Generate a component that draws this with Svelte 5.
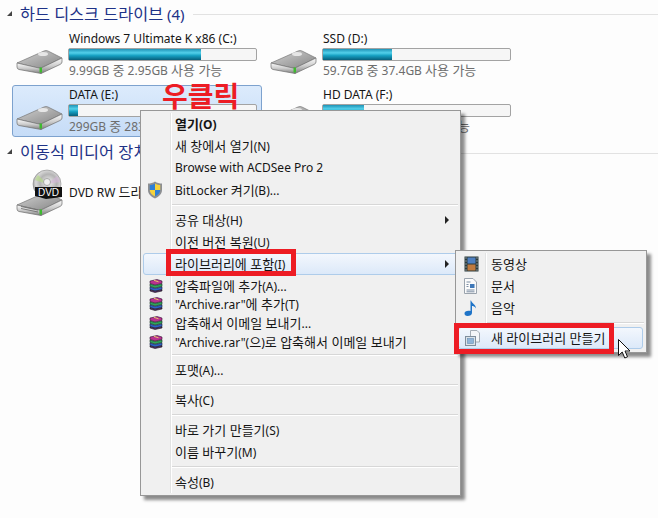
<script>
	const drives = [
		{ name: 'Windows 7 Ultimate K x86 (C:)', info: '9.99GB 중 2.95GB 사용 가능', used: 70.5 },
		{ name: 'SSD (D:)', info: '59.7GB 중 37.4GB 사용 가능', used: 37 },
		{ name: 'DATA (E:)', info: '299GB 중 283GB 사용 가능', used: 5, selected: true },
		{ name: 'HD DATA (F:)', info: '931GB 중 726GB 사용 가능', used: 22 }
	];

	const rarItems = [
		'압축파일에 추가(A)...',
		'"Archive.rar"에 추가(T)',
		'압축해서 이메일 보내기...',
		'"Archive.rar"(으)로 압축해서 이메일 보내기'
	];

	// hangul runs are set a size up, the old menu font drew them wider than its latin
	const runs = (s) => s.split(/([\uAC00-\uD7A3]+(?: [\uAC00-\uD7A3]+)*)/).filter(Boolean);
	const isKo = (s) => /[\uAC00-\uD7A3]/.test(s);
</script>

{#snippet label(text)}
	<span class="label">{#each runs(text) as r}<span class:ko={isKo(r)}>{r}</span>{/each}</span>
{/snippet}

<svg class="defs" width="0" height="0">
	<defs>
		<linearGradient id="hddTop" x1="0" y1="0" x2="1" y2="1">
			<stop offset="0" stop-color="#d4d4d4" />
			<stop offset="0.55" stop-color="#a8a8a8" />
			<stop offset="1" stop-color="#858585" />
		</linearGradient>
		<linearGradient id="hddFront" x1="0" y1="0" x2="0" y2="1">
			<stop offset="0" stop-color="#fcfcfc" />
			<stop offset="0.5" stop-color="#cdcdcd" />
			<stop offset="1" stop-color="#7d7d7d" />
		</linearGradient>
		<radialGradient id="disc" cx="0.55" cy="0.45" r="0.6">
			<stop offset="0" stop-color="#f4f4f4" />
			<stop offset="0.5" stop-color="#b4b4b4" />
			<stop offset="0.75" stop-color="#d8d8d8" />
			<stop offset="1" stop-color="#8e8e8e" />
		</radialGradient>
		<symbol id="hdd" viewBox="0 0 47 24">
			<path d="M1 13 L28 1 Q30 0 32 1 L46 8 L25 18 Q24 18.500 22 18 Z" fill="url(#hddTop)" stroke="#777" stroke-width="0.7" stroke-linejoin="round" />
			<ellipse cx="27" cy="4" rx="5" ry="2" fill="#e6e6e6" />
			<path d="M1 13 L23 18 L25 18 L25 23.500 L3 19.500 Q1 19 1 17 Z" fill="url(#hddFront)" stroke="#6e6e6e" stroke-width="0.7" stroke-linejoin="round" />
			<path d="M25 18 L46 8 L46 12 Q46 13.500 44 14.500 L25 23.500 Z" fill="url(#hddFront)" stroke="#6e6e6e" stroke-width="0.7" stroke-linejoin="round" />
			<rect x="23.500" y="17.500" width="2.500" height="5" fill="#3dbb2e" />
		</symbol>
		<symbol id="rar" viewBox="0 0 14 14">
			<path d="M1 2 L8 .5 L13 2 V4.500 L6 6 L1 4.500 Z" fill="#b8318f" stroke="#2b1030" stroke-width="0.6" stroke-linejoin="round" />
			<path d="M5 1.300 L9.500 2.800" stroke="#e6c36a" stroke-width="1" />
			<path d="M1 5 L6 6.500 L13 5 V7.500 L6 9 L1 7.500 Z" fill="#2fa65a" stroke="#10301d" stroke-width="0.6" stroke-linejoin="round" />
			<path d="M1 8 L6 9.500 L13 8 V10.500 L6 12 L1 10.500 Z" fill="#2f62c8" stroke="#101c40" stroke-width="0.6" stroke-linejoin="round" />
			<path d="M1 10.800 L6 12.200 L13 10.800 V12 L6 13.500 L1 12 Z" fill="#5a2a70" stroke="#15151a" stroke-width="0.6" stroke-linejoin="round" />
		</symbol>
	</defs>
</svg>

<div class="explorer">
	<div class="group-head">
		<span class="tri"></span>
		<span class="group-title">{@render label('하드 디스크 드라이브 (4)')}</span>
		<span class="rule"></span>
	</div>

	<div class="tiles">
		{#each drives as d}
			<div class="tile" class:selected={d.selected}>
				<svg class="hdd" width="47" height="24"><use href="#hdd" /></svg>
				<div class="tile-body">
					<div class="name">{d.name}</div>
					<div class="bar"><div class="fill" style="width: {d.used}%"></div></div>
					<div class="info">{@render label(d.info)}</div>
				</div>
			</div>
		{/each}
	</div>

	<div class="group-head second">
		<span class="tri"></span>
		<span class="group-title">{@render label('이동식 미디어 장치 (1)')}</span>
		<span class="rule"></span>
	</div>

	<div class="dvd-row">
		<svg class="dvd" width="47" height="47" viewBox="0 0 47 47">
			<circle cx="31" cy="15" r="14" fill="url(#disc)" stroke="#8a8a8a" stroke-width="0.6" />
			<path d="M31 15 L22 6 A13 13 0 0 0 19 11 Z" fill="#b7d98a" opacity="0.7" />
			<path d="M31 15 L41 7 A13 13 0 0 1 44 13 Z" fill="#d4b7d9" opacity="0.6" />
			<circle cx="31" cy="13" r="3.500" fill="#efefef" stroke="#999" stroke-width="0.8" />
			<use href="#hdd" x="0" y="23" width="47" height="24" />
			<path d="M5 37.500 L22 41 M5 39.500 L22 43" stroke="#666" stroke-width="0.8" />
			<path d="M19 18 H46 V28 L30 30 L19 27 Z" fill="#111" />
			<text x="32.500" y="26.500" class="dvd-label">DVD</text>
		</svg>
		<div class="name">{@render label('DVD RW 드라이브 (G:)')}</div>
	</div>
</div>

<div class="ctx-menu main">
	<div class="gutter"></div>
	<div class="item bold">{@render label('열기(O)')}</div>
	<div class="item">{@render label('새 창에서 열기(N)')}</div>
	<div class="item">Browse with ACDSee Pro 2</div>
	<div class="item">
		<svg class="ico shield" width="16" height="18" viewBox="0 0 16 18">
			<path d="M8 .5 C10 2 12.500 2.500 15 2.500 V9 C15 13 12 15.500 8 17.500 C4 15.500 1 13 1 9 V2.500 C3.500 2.500 6 2 8 .5 Z" fill="#8d8f92" />
			<path d="M8 2.500 C6 3.500 4.500 4 2.800 4 V9 H8 Z" fill="#2f7fd6" />
			<path d="M8 2.500 C10 3.500 11.500 4 13.200 4 V9 H8 Z" fill="#f6d23c" />
			<path d="M2.800 9 H8 V15.300 C5 14 2.800 12 2.800 9 Z" fill="#f6d23c" />
			<path d="M13.200 9 H8 V15.300 C11 14 13.200 12 13.200 9 Z" fill="#2f7fd6" />
		</svg>
		{@render label('BitLocker 켜기(B)...')}
	</div>
	<div class="sep"></div>
	<div class="item">{@render label('공유 대상(H)')}<span class="arrow"></span></div>
	<div class="item">{@render label('이전 버전 복원(U)')}</div>
	<div class="item hot">{@render label('라이브러리에 포함(I)')}<span class="arrow"></span></div>
	<div class="rar-list">
		{#each rarItems as text}
			<div class="item rar">
				<svg class="ico" width="14" height="14"><use href="#rar" /></svg>
				{@render label(text)}
			</div>
		{/each}
	</div>
	<div class="sep"></div>
	<div class="item">{@render label('포맷(A)...')}</div>
	<div class="sep"></div>
	<div class="item">{@render label('복사(C)')}</div>
	<div class="sep"></div>
	<div class="item">{@render label('바로 가기 만들기(S)')}</div>
	<div class="item">{@render label('이름 바꾸기(M)')}</div>
	<div class="sep"></div>
	<div class="item">{@render label('속성(B)')}</div>
</div>

<div class="ctx-menu sub">
	<div class="gutter"></div>
	<div class="item">
		<svg class="ico" width="15" height="16" viewBox="0 0 15 16">
			<rect x="0.500" y="0.500" width="14" height="15" fill="#2b3a3c" />
			<rect x="3.500" y="1.500" width="8" height="6" fill="#4e7fc0" />
			<rect x="3.500" y="8.500" width="8" height="6" fill="#c07a3e" />
			<path d="M1.500 2h1M1.500 5h1M1.500 8h1M1.500 11h1M1.500 14h1M12.500 2h1M12.500 5h1M12.500 8h1M12.500 11h1M12.500 14h1" stroke="#d8e0e0" stroke-width="1.200" />
		</svg>
		{@render label('동영상')}
	</div>
	<div class="item">
		<svg class="ico" width="13" height="16" viewBox="0 0 13 16">
			<path d="M.5 .5 H9 L12.500 4 V15.500 H.5 Z" fill="#fbfbfb" stroke="#9aa3ad" />
			<path d="M2.500 4h4M2.500 12h8M2.500 13.800h8" stroke="#7d8ea3" />
			<rect x="6" y="6" width="4.500" height="4" fill="#3f78b8" />
			<path d="M2.500 6.500h2M2.500 8.500h2" stroke="#7d8ea3" />
		</svg>
		{@render label('문서')}
	</div>
	<div class="item">
		<svg class="ico" width="14" height="17" viewBox="0 0 14 17">
			<path d="M7 1 C8 4 12 5 12 9 C11 7 9 6.500 8 6.500 V13.500 C8 15.500 6 16.500 3.500 16.500 C1.500 16.500 .5 15.500 .5 14 C.5 12 3 10.800 6.500 11.500 V1 Z" fill="#1f74c8" />
		</svg>
		{@render label('음악')}
	</div>
	<div class="sep"></div>
	<div class="item hot">
		<svg class="ico" width="16" height="16" viewBox="0 0 16 16">
			<path d="M5.500 .5 H12 L14.500 3 V12 H5.500 Z" fill="#f4f6f8" stroke="#a5adb5" />
			<rect x=".5" y="6.500" width="10" height="9" fill="#dbe3ea" stroke="#7f8e9c" />
			<rect x="2.500" y="8.500" width="6" height="5" fill="#8fb4d8" stroke="#6a8fb2" stroke-width="0.600" />
		</svg>
		{@render label('새 라이브러리 만들기')}
	</div>
</div>

<div class="mark mark-a"></div>
<div class="mark mark-b"></div>
<div class="callout">우클릭</div>

<svg class="cursor" width="13" height="20" viewBox="0 0 13 20">
	<path d="M.5 .5 V16.500 L4.200 13 L6.800 19 L9.500 17.800 L7 12 H12 Z" fill="#fff" stroke="#111" stroke-linejoin="round" />
</svg>

<style>
	:global(body) {
		background: #fdfdfd;
		overflow: hidden;
	}

	.defs {
		position: absolute;
	}

	.explorer {
		width: 658px;
		height: 518px;
		padding: 4px 0 0 0;
		box-sizing: border-box;
		font-family: 'Noto Sans', 'Noto Sans CJK KR', sans-serif;
		font-size: 12px;
		color: #151515;
	}

	.label {
		white-space: nowrap;
	}

	.ko {
		font-size: 1.085em;
	}

	.group-head {
		display: flex;
		align-items: center;
		height: 20px;
		margin-bottom: 5px;
	}

	.group-head.second {
		margin-top: 5px;
		margin-bottom: 0;
	}

	.second .rule {
		margin-top: 2px;
	}

	.tri {
		width: 0;
		height: 0;
		margin-left: 7px;
		margin-bottom: 2px;
		border-left: 5px solid transparent;
		border-bottom: 5px solid #444;
	}

	.group-title {
		margin-left: 8px;
		font-size: 15px;
		line-height: 20px;
		color: #1e3287;
		white-space: nowrap;
	}

	.rule {
		flex: 1;
		margin-left: 8px;
		height: 1px;
		background: #e2e2e2;
	}

	.tiles {
		display: grid;
		grid-template-columns: 250px 250px;
		grid-auto-rows: 52px;
		gap: 4px;
		margin-left: 12px;
	}

	.tile {
		display: flex;
		box-sizing: border-box;
		border: 1px solid transparent;
		border-radius: 3px;
	}

	.tile.selected {
		background: linear-gradient(#dcebfc, #c6dcf7);
		border-color: #7da2ce;
	}

	.hdd {
		flex: none;
		margin: 20px 6px 0 3px;
	}

	.tile-body {
		flex: 1;
		min-width: 0;
	}

	.name {
		line-height: 17px;
		white-space: nowrap;
	}

	.bar {
		box-sizing: border-box;
		width: 189px;
		height: 13px;
		margin-top: 1px;
		margin-left: -1px;
		background: #f6f6f6;
		border: 1px solid #a3a3a3;
		border-radius: 2px;
	}

	.fill {
		height: 100%;
		background: linear-gradient(#1f93b6, #52d0ea 35%, #16a0c2 60%, #075f7c);
	}

	.info {
		margin-top: 1px;
		line-height: 17px;
		color: #6d6d6d;
		white-space: nowrap;
	}

	.dvd-row {
		display: flex;
		align-items: center;
		gap: 6px;
		margin: 7px 0 0 16px;
	}

	.dvd-label {
		font-family: 'Liberation Sans', sans-serif;
		font-size: 10px;
		fill: #fff;
		text-anchor: middle;
	}

	.ctx-menu {
		position: absolute;
		box-sizing: border-box;
		padding: 2px;
		background: #f0f0f0;
		border: 1px solid #979797;
		box-shadow: 4px 4px 3px rgba(0, 0, 0, 0.45);
		font-family: 'Noto Sans', 'Noto Sans CJK KR', sans-serif;
		font-size: 12px;
		color: #151515;
	}

	.main {
		left: 140px;
		top: 110px;
		width: 321px;
		height: 386px;
	}

	.sub {
		left: 455px;
		top: 250px;
		width: 192px;
		height: 103px;
	}

	.gutter {
		position: absolute;
		top: 2px;
		bottom: 2px;
		left: 29px;
		width: 1px;
		background: #e2e3e3;
		border-right: 1px solid #fff;
	}

	.item {
		position: relative;
		display: flex;
		align-items: center;
		box-sizing: border-box;
		height: 22px;
		padding-left: 32px;
		padding-bottom: 2px;
		white-space: nowrap;
	}

	.bold {
		font-weight: 700;
	}

	.sub .item {
		padding-left: 33px;
	}

	.rar-list {
		padding-top: 1.500px;
	}

	.rar {
		height: 18.670px;
		padding-bottom: 1px;
	}

	.hot {
		margin-right: -1px;
		background: linear-gradient(#f3f7fd, #dce9f9);
		border: 1px solid #aeccea;
		border-radius: 3px;
		padding-left: 31px;
	}

	.sub .hot {
		margin-right: 1px;
		padding-left: 32px;
	}

	.sep {
		position: relative;
		height: 1px;
		margin: 3px 0 4px 29px;
		background: #d7d7d7;
		box-shadow: 0 1px 0 #fff;
	}

	.ico {
		position: absolute;
		left: 6px;
		top: 50%;
		transform: translateY(-50%);
	}

	.ico.shield {
		left: 4px;
	}

	.arrow {
		position: absolute;
		right: 9px;
		top: 50%;
		margin-top: -4px;
		border-left: 4px solid #222;
		border-top: 4px solid transparent;
		border-bottom: 4px solid transparent;
	}

	.mark {
		position: absolute;
		box-sizing: border-box;
		border: 5px solid #ed1c24;
	}

	.mark-a {
		left: 166px;
		top: 249px;
		width: 130px;
		height: 27px;
	}

	.mark-b {
		left: 454px;
		top: 323px;
		width: 160px;
		height: 31px;
	}

	.callout {
		position: absolute;
		left: 162px;
		top: 81px;
		font-family: 'Noto Sans CJK KR', sans-serif;
		font-size: 28px;
		font-weight: 700;
		line-height: 28px;
		color: #ed1c24;
	}

	.cursor {
		position: absolute;
		left: 618px;
		top: 339px;
	}
</style>
